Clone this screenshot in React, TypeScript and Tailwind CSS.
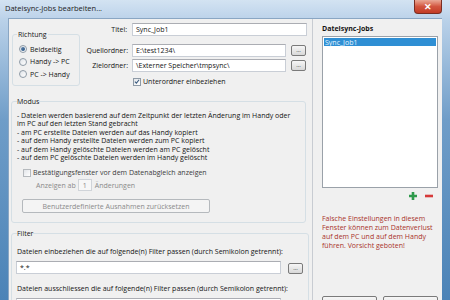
import React from 'react';

const font = "font-['Open_Sans','Noto_Sans',sans-serif]";

function Radio({ checked, label }: { checked?: boolean; label: string }) {
  return (
    <div className="flex h-[12.5px] items-center gap-[3px] pl-[3px]">
      <span className="flex h-[8px] w-[8px] items-center justify-center rounded-full border border-[#8e9aa6] bg-gradient-to-br from-[#dfe3e8] to-white">
        {checked && <span className="h-[4px] w-[4px] rounded-full bg-gradient-to-br from-[#6a8bb0] to-[#1f4f80]" />}
      </span>
      <span>{label}</span>
    </div>
  );
}

function Check({ checked, dim }: { checked?: boolean; dim?: boolean }) {
  return (
    <span
      className={`flex h-[8px] w-[8px] shrink-0 items-center justify-center border bg-gradient-to-br from-[#e2e5e9] to-white ${
        dim ? 'border-[#b5b9bd]' : 'border-[#8e9aa6]'
      }`}
    >
      {checked && (
        <svg viewBox="0 0 8 8" className="h-[7px] w-[7px]">
          <path d="M1.2 4.2 L3.2 6.2 L6.8 1.6" fill="none" stroke="#3a5a7e" strokeWidth="1.4" />
        </svg>
      )}
    </span>
  );
}

function Field({ value, className = '' }: { value?: string; className?: string }) {
  return (
    <div
      className={`flex h-[13px] items-center border border-[#c9ced6] border-t-[#abadb3] bg-white pl-[3px] ${className}`}
    >
      {value}
    </div>
  );
}

function Dots({ className = '' }: { className?: string }) {
  return (
    <div
      className={`flex h-[11px] w-[15px] shrink-0 items-end justify-center rounded-[2px] border border-[#7a7a7a] bg-gradient-to-b from-[#f6f6f6] to-[#d8d8d8] pb-[2px] text-[6px] leading-none text-[#222] ${className}`}
    >
      ...
    </div>
  );
}

export default function App() {
  return (
    <div
      className={`flex h-[300px] w-[450px] flex-col overflow-hidden bg-gradient-to-b from-[#c9dcef] via-[#6f9dc8] via-40% to-[#4b83b7] text-[7px] leading-[9px] ${font}`}
    >
      {/* title bar */}
      <div className="flex h-[18px] shrink-0 items-start justify-between bg-gradient-to-b from-[#d3e3f2] to-[#bdd3ea] pl-[5px] pr-[8px]">
        <span className="mt-[4px] text-[7.5px] text-[#1b1b1b]">Dateisync-Jobs bearbeiten...</span>
        <div className="flex h-[14px] w-[28px] items-center justify-center rounded-b-[4px] border border-t-0 border-[#7a2d22] bg-gradient-to-b from-[#e9a896] via-[#d2553f] to-[#c23b25] text-[9px] font-bold text-white">
          ✕
        </div>
      </div>

      {/* client */}
      <div className="mx-[8px] flex min-h-0 flex-1 border-l border-t border-[#8aa6c3] bg-[#f0f0f0] text-[#141414]">
        {/* left column */}
        <div className="flex w-[298px] shrink-0 flex-col">
          <div className="flex h-[78px] shrink-0">
            <fieldset className="ml-[3px] mt-[11px] h-[56px] w-[68px] rounded-[3px] border border-[#d5dfe5] px-[3px]">
              <legend className="ml-[1px] px-[1px] leading-[9px]">Richtung</legend>
              <div className="mt-[4px] flex flex-col">
                <Radio checked label="Beidseitig" />
                <Radio label="Handy -> PC" />
                <Radio label="PC -> Handy" />
              </div>
            </fieldset>

            <div className="ml-[4px] flex flex-1 flex-col">
              <div className="mt-[4px] flex items-center">
                <span className="w-[44px] pr-[1px] text-right">Titel:</span>
                <Field value="Sync_Job1" className="ml-[4px] w-[175px]" />
              </div>
              <div className="mt-[8px] flex items-center">
                <span className="w-[44px] text-right">Quellordner:</span>
                <Field value="E:\test1234\" className="ml-[4px] w-[154px]" />
                <Dots className="ml-[5px]" />
              </div>
              <div className="mt-[2px] flex items-center">
                <span className="w-[44px] text-right">Zielordner:</span>
                <Field value="\Externer Speicher\tmpsync\" className="ml-[4px] w-[154px]" />
                <Dots className="ml-[5px]" />
              </div>
              <div className="ml-[49px] mt-[5px] flex items-center gap-[2px]">
                <Check checked />
                <span>Unterordner einbeziehen</span>
              </div>
            </div>
          </div>

          <fieldset className="ml-[2px] mr-[1px] h-[126px] shrink-0 rounded-[3px] border border-[#d5dfe5] px-[5px]">
            <legend className="leading-[9px]">Modus</legend>
            <div className="mt-[6px] leading-[8.4px]">
              <div>- Dateien werden basierend auf dem Zeitpunkt der letzten Änderung im Handy oder</div>
              <div>im PC auf den letzten Stand gebracht</div>
              <div>- am PC erstellte Dateien werden auf das Handy kopiert</div>
              <div>- auf dem Handy erstellte Dateien werden zum PC kopiert</div>
              <div>- auf dem Handy gelöschte Dateien werden am PC gelöscht</div>
              <div>- auf dem PC gelöschte Dateien werden im Handy gelöscht</div>
            </div>
            <div className="ml-[6px] mt-[6px] flex items-center gap-[2px] text-[#3c3c3c]">
              <Check dim />
              <span>Bestätigungsfenster vor dem Datenabgleich anzeigen</span>
            </div>
            <div className="ml-[19px] mt-[2px] flex h-[12px] items-center text-[#8a8a8a]">
              <span>Anzeigen ab</span>
              <div className="ml-[2px] flex h-[12px] w-[14px] items-center justify-center border border-[#d0d4d9] bg-[#f7f7f7]">1</div>
              <span className="ml-[3px]">Änderungen</span>
            </div>
            <div className="ml-[5px] mt-[8px] flex h-[14px] w-[188px] items-center justify-center rounded-[2px] border border-[#b5b9bd] bg-[#f4f4f4] text-[#8a8a8a]">
              Benutzerdefinierte Ausnahmen zurücksetzen
            </div>
          </fieldset>

          <fieldset className="ml-[2px] mr-[1px] mt-[6px] h-[80px] shrink-0 rounded-[3px] border border-[#d5dfe5] px-[5px]">
            <legend className="leading-[9px]">Filter</legend>
            <div className="mt-[9px]">Dateien einbeziehen die auf folgende(n) Filter passen (durch Semikolon getrennt):</div>
            <div className="mt-[4px] flex items-center">
              <Field value="*.*" className="-ml-[1px] w-[265px]" />
              <Dots className="ml-[7px] mt-[3px] h-[10px] w-[13px]" />
            </div>
            <div className="mt-[10px]">Dateien ausschliessen die auf folgende(n) Filter passen (durch Semikolon getrennt):</div>
            <div className="mt-[4px] flex items-center">
              <Field className="-ml-[1px] w-[265px]" />
              <Dots className="ml-[7px] mt-[3px] h-[10px] w-[13px]" />
            </div>
          </fieldset>
        </div>

        {/* right column */}
        <div className="ml-[5px] flex flex-1 flex-col border-l border-[#c8ccd2] pl-[9px] pr-[4px]">
          <div className="mt-[5px] font-bold">Dateisync-Jobs</div>
          <div className="mt-[3px] h-[152px] border border-[#9aa1a9] bg-white p-[1px]">
            <div className="flex h-[8px] items-center bg-[#2f8fd4] pl-[1px] text-[#e6f6ff]">Sync_Job1</div>
          </div>
          <div className="mt-[3px] flex justify-end gap-[6px] pr-[4px]">
            <svg viewBox="0 0 10 10" className="h-[10px] w-[10px]">
              <path d="M5 1 V9 M1 5 H9" stroke="#2e9a4c" strokeWidth="2.6" />
            </svg>
            <svg viewBox="0 0 10 10" className="h-[10px] w-[10px]">
              <path d="M1 5 H9" stroke="#d63a3a" strokeWidth="2.6" />
            </svg>
          </div>
          <div className="mt-[13px] leading-[9px] text-[#a9332b]">
            Falsche Einstellungen in diesem Fenster können zum Datenverlust auf dem PC und auf dem Handy führen. Vorsicht geboten!
          </div>
          <div className="mt-auto flex gap-[6px]">
            <div className="h-[14px] w-[55px] translate-y-[10px] rounded-[2px] border border-[#7a7a7a] bg-gradient-to-b from-[#f6f6f6] to-[#dcdcdc]" />
            <div className="h-[14px] w-[55px] translate-y-[10px] rounded-[2px] border border-[#7a7a7a] bg-gradient-to-b from-[#f6f6f6] to-[#dcdcdc]" />
          </div>
        </div>
      </div>
    </div>
  );
}
